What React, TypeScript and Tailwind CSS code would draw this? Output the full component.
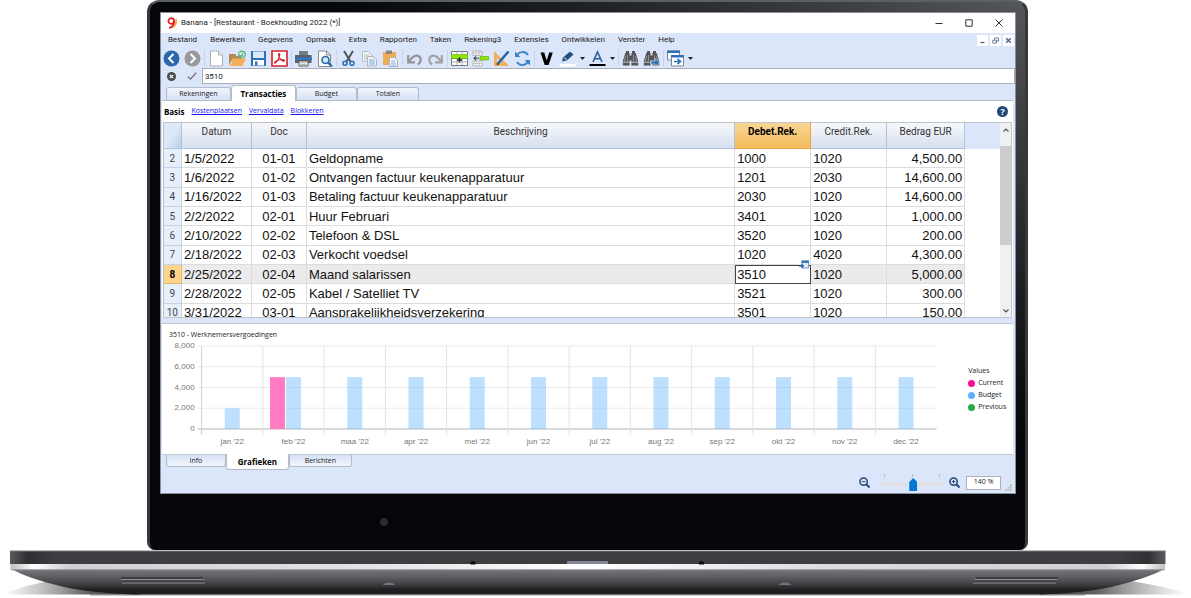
import { useState } from "react";
import type { ReactNode } from "react";

const rows = [
  ["2", "1/5/2022", "01-01", "Geldopname", "1000", "1020", "4,500.00"],
  ["3", "1/6/2022", "01-02", "Ontvangen factuur keukenapparatuur", "1201", "2030", "14,600.00"],
  ["4", "1/16/2022", "01-03", "Betaling factuur keukenapparatuur", "2030", "1020", "14,600.00"],
  ["5", "2/2/2022", "02-01", "Huur Februari", "3401", "1020", "1,000.00"],
  ["6", "2/10/2022", "02-02", "Telefoon & DSL", "3520", "1020", "200.00"],
  ["7", "2/18/2022", "02-03", "Verkocht voedsel", "1020", "4020", "4,300.00"],
  ["8", "2/25/2022", "02-04", "Maand salarissen", "3510", "1020", "5,000.00"],
  ["9", "2/28/2022", "02-05", "Kabel / Satelliet TV", "3521", "1020", "300.00"],
  ["10", "3/31/2022", "03-01", "Aansprakelijkheidsverzekering", "3501", "1020", "150.00"],
];

const menus = ["Bestand", "Bewerken", "Gegevens", "Opmaak", "Extra", "Rapporten", "Taken", "Rekening3", "Extensies", "Ontwikkelen", "Venster", "Help"];

const months = [
  { name: "jan '22", current: 0, budget: 2000 },
  { name: "feb '22", current: 5000, budget: 5000 },
  { name: "maa '22", current: 0, budget: 5000 },
  { name: "apr '22", current: 0, budget: 5000 },
  { name: "mei '22", current: 0, budget: 5000 },
  { name: "jun '22", current: 0, budget: 5000 },
  { name: "jul '22", current: 0, budget: 5000 },
  { name: "aug '22", current: 0, budget: 5000 },
  { name: "sep '22", current: 0, budget: 5000 },
  { name: "okt '22", current: 0, budget: 5000 },
  { name: "nov '22", current: 0, budget: 5000 },
  { name: "dec '22", current: 0, budget: 5000 },
];

function Tool({ label, children }: { label: string; children: ReactNode }) {
  return (
    <button type="button" aria-label={label} className="flex h-[17px] w-[17px] shrink-0 items-center justify-center">
      <svg viewBox="0 0 17 17" className="h-[17px] w-[17px]" fill="none">
        {children}
      </svg>
    </button>
  );
}

function Caret({ label }: { label: string }) {
  return (
    <button type="button" aria-label={label} className="flex h-[17px] w-[5px] shrink-0 items-center">
      <svg viewBox="0 0 5 3" className="h-[3px] w-[5px]">
        <path d="M0 0h5L2.500 3z" fill="#222" />
      </svg>
    </button>
  );
}

function Divider() {
  return <span className="h-4 w-px shrink-0 bg-[#c9d3e6]" />;
}

function Group({ children }: { children: ReactNode }) {
  return <div className="flex items-center gap-1">{children}</div>;
}

function Binoculars() {
  return (
    <g fill="#555">
      <path d="M4 1h3v2h.6v12.500H.8V11L3.300 3H4zM10 1h3v2h.7l2.500 8v4.500H9.400V3h.6z" />
      <path d="M7 5.500h3v5H7z" />
      <path d="M3.600 6l-1.200 5M5.500 5v6M13.500 6l1.200 5M11.500 5v6" stroke="#a9afba" strokeWidth=".7" />
      <path d="M1 12.200h6.500M9.500 12.200H16" stroke="#dbe6fa" strokeWidth=".8" />
    </g>
  );
}

function Toolbar() {
  return (
    <div className="flex h-5 items-center gap-[3px] pl-[2px]">
      <Group>
        <Tool label="Terug">
          <circle cx="8.500" cy="8.500" r="8" fill="#2a68ac" />
          <path d="M10.500 4L6 8.500l4.500 4.500" stroke="#fff" strokeWidth="2" />
        </Tool>
        <Tool label="Vooruit">
          <circle cx="8.500" cy="8.500" r="8" fill="#999" />
          <path d="M6.500 4L11 8.500 6.500 13" stroke="#fff" strokeWidth="2" />
        </Tool>
      </Group>
      <Divider />
      <Group>
        <Tool label="Nieuw">
          <path d="M2.500 1h8l4 4v11h-12z" fill="#fff" stroke="#b0b0b0" />
          <path d="M10.500 1v4h4" fill="#eee" stroke="#b0b0b0" />
        </Tool>
        <Tool label="Openen">
          <path d="M0 15V4h6l1.500 2H13v3H3.500z" fill="#b58a50" />
          <path d="M1 16L4 8.500h13L13.500 16z" fill="#f3ae58" />
          <circle cx="13" cy="4.300" r="3.900" fill="#63b58c" />
          <path d="M11 4.500a2 2 0 1 1 2 2M11 2.500v2h2" stroke="#fff" strokeWidth=".9" />
        </Tool>
        <Tool label="Opslaan">
          <path d="M1 1h15v15H1z" fill="#2d72b8" />
          <path d="M3 1.500h11v6.500H3z" fill="#dceaf7" />
          <path d="M3 10h11v5.500H3z" fill="#fff" />
          <path d="M5 11.500h2.500v4H5z" fill="#2d72b8" />
        </Tool>
        <Tool label="PDF">
          <path d="M1 1h15v15H1z" fill="#fff" stroke="#d2232a" strokeWidth="1.600" />
          <path d="M8.300 3.500c-1.500 0-.6 3 1 5.300 1.500 2 4 3 4.200 1.800.2-1.200-3-1.300-5.500-.6-3 .8-5 2-4.300 3 .8.900 3.200-2.500 4.200-5.200.8-2.200 1.200-4.300.4-4.300z" stroke="#d2232a" strokeWidth="1.100" />
        </Tool>
      </Group>
      <Divider />
      <Group>
        <Tool label="Afdrukken">
          <path d="M4 1h9v4H4z" fill="#777b82" />
          <path d="M1 5h15.500v8H0V5z" fill="#5c6168" />
          <path d="M0 7.500h17v2.500H0z" fill="#2f78bd" />
          <path d="M4 11h9v5H4z" fill="#fff" stroke="#555" />
          <path d="M5.500 12.800h6M5.500 14.500h6" stroke="#999" strokeWidth=".8" />
        </Tool>
        <Tool label="Afdrukvoorbeeld">
          <path d="M2.500 1h8l4 4v11.500h-12z" fill="#fff" stroke="#8a8a8a" />
          <path d="M10.500 1v4h4" stroke="#8a8a8a" />
          <circle cx="9.500" cy="10" r="3.500" fill="#d7e8f8" stroke="#2769ae" strokeWidth="1.700" />
          <path d="M12 12.500l4 4" stroke="#2769ae" strokeWidth="2.200" />
        </Tool>
      </Group>
      <Divider />
      <Group>
        <Tool label="Knippen">
          <path d="M4 1l6.800 11M13 1L6.200 12" stroke="#555" strokeWidth="2" />
          <circle cx="5" cy="13.300" r="2" stroke="#2d72b8" strokeWidth="1.600" />
          <circle cx="12" cy="13.300" r="2" stroke="#2d72b8" strokeWidth="1.600" />
        </Tool>
        <Tool label="Kopiëren">
          <path d="M1.500 1.500h6l3 3v7h-9z" fill="#f2f3f5" stroke="#b8bec8" />
          <path d="M3 5h5M3 7h5M3 9h5" stroke="#b8bec8" />
          <path d="M6.500 6.500h5.500l3.500 3v6.500h-9z" fill="#eef3f9" stroke="#a9b7c8" />
          <path d="M8 10h5M8 12h6M8 14h6" stroke="#9fc3e6" strokeWidth="1.300" />
        </Tool>
        <Tool label="Plakken">
          <path d="M1 2h13v13H1z" fill="#f0ac55" />
          <path d="M4 .5h6V4H4z" fill="#8b847b" />
          <path d="M7.500 7.500h5l3 3v6h-8z" fill="#f3f6fa" stroke="#a9b3c0" />
          <path d="M9 11h4M9 13h5M9 15h5" stroke="#a9cbe8" strokeWidth="1.300" />
        </Tool>
      </Group>
      <Divider />
      <Group>
        <Tool label="Ongedaan maken">
          <path d="M2.200 5v7.300h6.800M3 11.500C6 7 9.500 4.500 12.500 6c3 1.600 3.200 6-.8 8.500" stroke="#959595" strokeWidth="2.200" />
        </Tool>
        <Tool label="Opnieuw">
          <path d="M14.800 5v7.300H8M14 11.500C11 7 7.500 4.500 4.500 6c-3 1.600-3.200 6 .8 8.500" stroke="#a3a3a3" strokeWidth="2.200" />
        </Tool>
      </Group>
      <Divider />
      <Group>
        <Tool label="Rij invoegen">
          <path d="M.5 1.500h16v14H.5z" fill="#fff" stroke="#777" />
          <path d="M.5 8.500h16M.5 12h16M6 9v6M11 9v6M6 1.500v3M11 1.500v3" stroke="#999" strokeWidth=".8" />
          <path d="M0 4.500h17v4H0z" fill="#8fe800" stroke="#5b9d16" strokeWidth=".6" />
          <path d="M8.500 7.500v5M6 10h5" stroke="#222" strokeWidth="1.400" />
        </Tool>
        <Tool label="Rij toevoegen">
          <path d="M1 1h9v4.500H1zM1 11h9v5H1z" fill="#fff" stroke="#aaa" strokeWidth=".8" />
          <path d="M4 1v4.500M7 1v4.500M1 3h9M4 11v5M7 11v5M1 13.500h9" stroke="#aaa" strokeWidth=".7" />
          <path d="M8 6.500h8.500v3.500H8z" fill="#8fe800" stroke="#5b9d16" strokeWidth=".6" />
          <path d="M2 8.300h5M4 6.300l-2 2 2 2" stroke="#444" strokeWidth="1.100" />
        </Tool>
        <Tool label="Ontwerp">
          <path d="M1 1l15 15H1z" fill="#f0ae5e" />
          <path d="M4 8l5 5H4z" fill="#dbe6fa" />
          <path d="M15.500 1.500L5 13.500" stroke="#29639f" strokeWidth="2.600" />
          <path d="M3.500 15.500l.4-3 2.300 2z" fill="#444" />
        </Tool>
        <Tool label="Vernieuwen">
          <path d="M2.500 7A6.300 6.300 0 0 1 14 5M14.500 10A6.300 6.300 0 0 1 3 12" stroke="#3d86c6" strokeWidth="2" />
          <path d="M1 1.500V7h5.500zM16 15.500V10h-5.500z" fill="#3d86c6" />
        </Tool>
      </Group>
      <Divider />
      <Group>
        <Tool label="Controleren">
          <path d="M2.500 2.500h3.700l2.500 8 2.500-8h3.600L10.600 15H6.700z" fill="#000" />
        </Tool>
        <Tool label="Markeren">
          <path d="M3 11.500l1-4L11 1.500l3.500 3L8 10.500z" fill="#24507f" />
          <path d="M5 7.500l3 2.700" stroke="#dbe6fa" />
          <path d="M.5 14h16v2.500H.5z" fill="#fff" />
        </Tool>
        <Caret label="Markeerkleur" />
        <Tool label="Tekstkleur">
          <path d="M4 12L8.500 2 13 12M5.500 8.800h6" stroke="#2b5f97" strokeWidth="1.600" />
          <path d="M.5 14h16v2H.5z" fill="#000" />
        </Tool>
        <Caret label="Tekstkleuren" />
      </Group>
      <Divider />
      <Group>
        <Tool label="Zoeken">
          <Binoculars />
        </Tool>
        <Tool label="Volgende zoeken">
          <Binoculars />
          <path d="M8 11h4V8.500l5 4-5 4v-2.500H8z" fill="#2d72b8" stroke="#dbe6fa" strokeWidth=".6" />
        </Tool>
      </Group>
      <Divider />
      <Group>
        <Tool label="Vensters">
          <path d="M.5 1h12v9H.5z" fill="#fff" stroke="#7d8794" />
          <path d="M0 .5h13V3H0z" fill="#2d72b8" />
          <path d="M4.500 6h12v10h-12z" fill="#fff" stroke="#7d8794" />
          <path d="M4 5h13v2.500H4z" fill="#2d72b8" />
          <path d="M7 11.500h6M10.500 8.800l3 2.700-3 2.700" stroke="#2d72b8" strokeWidth="1.700" />
        </Tool>
        <Caret label="Vensterkeuze" />
      </Group>
    </div>
  );
}

function TitleBar() {
  return (
    <header className="flex h-5 shrink-0 items-center bg-white pl-[6px] text-[8px] text-[#222]">
      <svg viewBox="0 0 11 12" className="mr-[3px] h-3 w-[11px]" fill="none">
        <circle cx="4.200" cy="4" r="2.800" stroke="#e01f2d" strokeWidth="1.800" />
        <path d="M7 4c.3 3.500-1.300 6.200-5 6.800" stroke="#e01f2d" strokeWidth="1.800" />
        <path d="M9 1.500c1.500 4 0 8-4 9.500 3-2.500 4-5 4-9.500z" fill="#f5a41f" stroke="#f5a41f" strokeWidth=".8" />
      </svg>
      <h1>Banana - [Restaurant - Boekhouding 2022 (*)]</h1>
      <div className="ml-auto flex items-center gap-[22px] pr-3">
        <button type="button" aria-label="Minimaliseren">
          <svg viewBox="0 0 8 8" className="block h-2 w-2"><path d="M.5 4.500h7" stroke="#333" /></svg>
        </button>
        <button type="button" aria-label="Maximaliseren">
          <svg viewBox="0 0 8 8" className="block h-2 w-2"><path d="M.8.8h6.400v6.400H.8z" fill="none" stroke="#333" /></svg>
        </button>
        <button type="button" aria-label="Sluiten">
          <svg viewBox="0 0 8 8" className="block h-2 w-2"><path d="M.5.5l7 7M7.500.5l-7 7" stroke="#333" /></svg>
        </button>
      </div>
    </header>
  );
}

function MenuBar() {
  const box = "flex h-[11px] w-[11px] items-center justify-center bg-white";
  return (
    <nav className="flex h-[14px] items-center pl-[7px] text-[8px] text-[#222]">
      <div className="flex gap-[13px]">
        {menus.map((m) => (
          <button key={m} type="button">{m}</button>
        ))}
      </div>
      <div className="ml-auto flex gap-[2px] pr-px">
        <button type="button" aria-label="Document minimaliseren" className={box}>
          <svg viewBox="0 0 7 7" className="h-[7px] w-[7px]"><path d="M1.500 5.500h4" stroke="#4c5a78" strokeWidth="1.200" /></svg>
        </button>
        <button type="button" aria-label="Document herstellen" className={box}>
          <svg viewBox="0 0 7 7" className="h-[7px] w-[7px]" fill="none" stroke="#6b7894"><path d="M2.500 2.500v-1.500h4v3H5M.8 3.200h3.700v2.800H.8z" /></svg>
        </button>
        <button type="button" aria-label="Document sluiten" className={box}>
          <svg viewBox="0 0 7 7" className="h-[7px] w-[7px]"><path d="M1.200 1.200l4.600 4.600M5.800 1.200L1.200 5.800" stroke="#56627d" strokeWidth="1.400" /></svg>
        </button>
      </div>
    </nav>
  );
}

function EditRow() {
  return (
    <div className="flex h-4 items-center">
      <button type="button" aria-label="Annuleren" className="ml-[6px]">
        <svg viewBox="0 0 9 9" className="block h-[9px] w-[9px]">
          <circle cx="4.500" cy="4.500" r="4.500" fill="#4a4a4a" />
          <path d="M2.800 2.800l3.400 3.400M6.200 2.800L2.800 6.200" stroke="#fff" strokeWidth="1.200" />
        </svg>
      </button>
      <button type="button" aria-label="Bevestigen" className="ml-[11px]">
        <svg viewBox="0 0 10 8" className="block h-2 w-[10px]" fill="none">
          <path d="M.7 4.500L3.500 7 9.300.8" stroke="#777" strokeWidth="1.300" />
        </svg>
      </button>
      <input
        aria-label="Celinhoud"
        defaultValue="3510"
        className="ml-[5px] h-4 min-w-0 flex-1 border border-[#a9adb5] bg-white px-[2px] text-[8px] text-[#222] outline-none"
      />
    </div>
  );
}

function TopTabs() {
  const tab = "h-[13px] rounded-t-[3px] border border-b-0 border-[#b4bccb] bg-linear-to-b from-[#f2f6fd] to-[#d5e1f5]";
  return (
    <div className="flex h-[17px] items-end border-b border-[#b9bcc4] pl-1 font-['Open_Sans',sans-serif] text-[7px] leading-[12px] text-[#222]">
      <button type="button" className={`${tab} w-[65px]`}>Rekeningen</button>
      <button type="button" className="-mb-px h-4 w-[65px] rounded-t-[3px] border border-b-0 border-[#b4bccb] bg-white text-[8px] font-bold text-black">
        Transacties
      </button>
      <button type="button" className={`${tab} w-[61px]`}>Budget</button>
      <button type="button" className={`${tab} w-[62px]`}>Totalen</button>
    </div>
  );
}

function ViewLinks() {
  return (
    <div className="flex h-[21px] items-center gap-[7px] pl-px pr-1 font-['Open_Sans',sans-serif] text-[7px]">
      <span className="text-[8px] font-bold text-black">Basis</span>
      {["Kostenplaatsen", "Vervaldata", "Blokkeren"].map((l) => (
        <a key={l} href={`#${l}`} className="text-[#1414f0] underline">{l}</a>
      ))}
      <button type="button" aria-label="Hulp" className="ml-auto flex h-[11px] w-[11px] items-center justify-center rounded-full bg-[#22487a] text-[9px] font-bold leading-[11px] text-white">
        ?
      </button>
    </div>
  );
}

function Ledger() {
  const head = "border-b border-r border-[#afc3dd] bg-linear-to-b from-[#f6f8fb] to-[#d7e0ee] p-0 pt-[2px] align-top font-normal leading-[14px]";
  const cell = "border-b border-r border-[#dcdcdc] p-0 px-[2px] leading-[15px]";
  return (
    <div className="flex h-[196px] overflow-hidden border border-[#bfc3ca]">
      <div className="h-[194px] min-w-0 flex-1 overflow-hidden">
        <table className="h-[200px] w-full table-fixed border-separate border-spacing-0 text-[13px] text-[#111]">
          <colgroup>
            <col className="w-[18px]" />
            <col className="w-[70px]" />
            <col className="w-[55px]" />
            <col />
            <col className="w-[76px]" />
            <col className="w-[76px]" />
            <col className="w-[78px]" />
            <col className="w-[35px]" />
          </colgroup>
          <thead>
            <tr className="h-[26px] font-[Roboto,sans-serif] text-[10px] text-[#333]">
              <th aria-label="Rij" className="border-b border-r border-[#afc3dd] bg-linear-to-br from-[#dde8f8] from-50% to-[#b6cdec] p-0" />
              <th className={head}>Datum</th>
              <th className={head}>Doc</th>
              <th className={head}>Beschrijving</th>
              <th className="border-b border-r border-[#f0a24a] bg-linear-to-b from-[#fad695] to-[#f1bb58] p-0 pt-[2px] align-top font-bold leading-[14px] text-black">Debet.Rek.</th>
              <th className={head}>Credit.Rek.</th>
              <th className={head}>Bedrag EUR</th>
              <td className="bg-[#dbe6fa] p-0" />
            </tr>
          </thead>
          <tbody>
            {rows.map((r) => {
              const active = r[0] === "8";
              const dark = active ? `${cell} bg-[#ebebeb]` : cell;
              return (
                <tr key={r[0]}>
                  <th
                    className={
                      active
                        ? "border-b border-r border-[#e9b65f] bg-[#fcd48b] p-0 font-[Roboto,sans-serif] text-[10px] font-bold leading-[15px] text-black"
                        : "border-b border-r border-[#c3d2e8] bg-[#e7effb] p-0 font-[Roboto,sans-serif] text-[10px] font-normal leading-[15px] text-[#444]"
                    }
                  >
                    {r[0]}
                  </th>
                  <td className={dark}>{r[1]}</td>
                  <td className={`${dark} text-center`}>{r[2]}</td>
                  <td className={dark}>{r[3]}</td>
                  <td className={active ? "relative p-0 px-[2px] leading-[15px] outline outline-1 -outline-offset-1 outline-[#444]" : cell}>
                    {r[4]}
                    {active && (
                      <svg viewBox="0 0 10 10" className="absolute -top-[5px] right-[2px] h-[10px] w-[10px]">
                        <path d="M3 1h6.500v7H3z" fill="#dfe9f4" stroke="#7f9fc4" />
                        <path d="M2.500.5h7.500V3H2.500z" fill="#3a78b8" />
                        <path d="M0 6h4M2.500 4l2 2-2 2" fill="none" stroke="#2d72b8" strokeWidth="1.300" />
                      </svg>
                    )}
                  </td>
                  <td className={dark}>{r[5]}</td>
                  <td className={`${dark} text-right`}>{r[6]}</td>
                  <td className="p-0" />
                </tr>
              );
            })}
          </tbody>
        </table>
      </div>
      <div className="flex w-[11px] flex-col items-center bg-[#f0f0f0]">
        <button type="button" aria-label="Omhoog" className="flex h-[13px] items-center">
          <svg viewBox="0 0 6 4" className="h-1 w-[6px]"><path d="M.5 3.500L3 1l2.500 2.500" fill="none" stroke="#555" strokeWidth="1.200" /></svg>
        </button>
        <div className="mt-[10px] h-[99px] w-full bg-[#cdcdcd]" />
        <button type="button" aria-label="Omlaag" className="mt-auto flex h-[13px] items-center">
          <svg viewBox="0 0 6 4" className="h-1 w-[6px]"><path d="M.5.5L3 3 5.500.5" fill="none" stroke="#555" strokeWidth="1.200" /></svg>
        </button>
      </div>
    </div>
  );
}

function Chart() {
  const left = 39;
  const top = 6;
  const height = 83;
  const pitch = 61.25;
  const y = (v: number) => top + height - (v / 8000) * height;
  return (
    <svg viewBox="0 0 776 112" className="h-[112px] min-w-0 flex-1" role="img" aria-label="Werknemersvergoedingen per maand" fontFamily="'Liberation Sans', Arial, sans-serif" fontSize="8" fill="#777">
      {[0, 2000, 4000, 6000, 8000].map((v) => (
        <g key={v}>
          <line x1={left - 4} x2={left + pitch * 12} y1={y(v)} y2={y(v)} stroke={v === 0 ? "#b5b5b5" : "#ebebeb"} />
          <text x={left - 7} y={y(v) + 2} textAnchor="end">{v.toLocaleString("en-US")}</text>
        </g>
      ))}
      {months.map((m, i) => {
        const mid = left + pitch * (i + 0.5);
        return (
          <g key={m.name}>
            <line x1={left + pitch * i} x2={left + pitch * i} y1={top} y2={top + height + 6} stroke={i === 0 ? "#cfcfcf" : "#e4e4e4"} />
            <rect x={mid - 23.500} y={y(m.current)} width="15" height={(m.current / 8000) * height} fill="#ff7cc0" />
            <rect x={mid - 7.500} y={y(m.budget)} width="15" height={(m.budget / 8000) * height} fill="#7cc2ff" fillOpacity=".5" />
            <text x={mid} y={top + height + 15} textAnchor="middle">{m.name}</text>
          </g>
        );
      })}
    </svg>
  );
}

function ChartPanel() {
  return (
    <section className="h-[132px] border-y border-[#c3c7ce] bg-white font-['Open_Sans',sans-serif] text-[7px] text-[#222]">
      <h2 className="pl-[7px] pt-[6px] leading-[10px]">3510 - Werknemersvergoedingen</h2>
      <div className="flex">
        <Chart />
        <div className="w-[74px] pt-[25px] leading-[12px]">
          <p className="pl-[29px]">Values</p>
          <ul className="pl-[29px]">
            <li className="flex items-center gap-[3px]"><span className="h-[7px] w-[7px] rounded-full bg-[#ff0a96]" />Current</li>
            <li className="flex items-center gap-[3px]"><span className="h-[7px] w-[7px] rounded-full bg-[#5eb0fb]" />Budget</li>
            <li className="flex items-center gap-[3px]"><span className="h-[7px] w-[7px] rounded-full bg-[#2cab43]" />Previous</li>
          </ul>
        </div>
      </div>
    </section>
  );
}

function BottomTabs() {
  const tab = "h-3 rounded-b-[3px] border border-t-0 border-[#b4bccb] bg-linear-to-b from-[#d5e1f5] to-[#f2f6fd]";
  return (
    <div className="flex h-[15px] items-start pl-[5px] font-['Open_Sans',sans-serif] text-[7px] leading-[11px] text-[#222]">
      <button type="button" className={`${tab} w-[60px]`}>Info</button>
      <button type="button" className="-mt-px h-4 w-[63px] rounded-b-[3px] border border-t-0 border-[#b4bccb] bg-white text-[8px] font-bold text-black">
        Grafieken
      </button>
      <button type="button" className={`${tab} w-[63px]`}>Berichten</button>
    </div>
  );
}

function Lens({ plus }: { plus: boolean }) {
  return (
    <svg viewBox="0 0 11 11" className="block h-[11px] w-[11px]" fill="none" stroke="#23497a">
      <circle cx="4.600" cy="4.600" r="3.700" strokeWidth="1.500" />
      <path d="M7.300 7.300l3.200 3.200" strokeWidth="2" />
      <path d={plus ? "M2.800 4.600h3.600M4.600 2.800v3.600" : "M2.800 4.600h3.600"} />
    </svg>
  );
}

function StatusBar() {
  const [zoom, setZoom] = useState(52);
  return (
    <footer className="flex h-[23px] items-center justify-end pr-[3px] pt-[2px]">
      <button type="button" aria-label="Uitzoomen" className="mr-[10px]"><Lens plus={false} /></button>
      <div className="flex w-16 flex-col">
        <div className="flex h-1 justify-between px-1">
          <span className="h-[3px] w-px bg-[#b5b5b5]" />
          <span className="h-[3px] w-px bg-[#b5b5b5]" />
          <span className="h-[3px] w-px bg-[#b5b5b5]" />
        </div>
        <input
          type="range"
          aria-label="Zoom"
          min={0}
          max={100}
          value={zoom}
          onChange={(e) => setZoom(Number(e.target.value))}
          className="block h-[13px] w-16 appearance-none bg-transparent [&::-webkit-slider-runnable-track]:h-[3px] [&::-webkit-slider-runnable-track]:bg-[#e1e1e1] [&::-webkit-slider-thumb]:-mt-[5px] [&::-webkit-slider-thumb]:h-[13px] [&::-webkit-slider-thumb]:w-2 [&::-webkit-slider-thumb]:appearance-none [&::-webkit-slider-thumb]:bg-[#0078d7] [&::-webkit-slider-thumb]:[clip-path:polygon(0_30%,50%_0,100%_30%,100%_100%,0_100%)]"
        />
      </div>
      <button type="button" aria-label="Inzoomen" className="ml-[5px] mr-[6px]"><Lens plus /></button>
      <output className="flex h-[14px] w-[35px] items-center justify-center border border-[#aeb2b8] bg-white font-['Open_Sans',sans-serif] text-[7px] text-[#222]">140 %</output>
      <svg viewBox="0 0 7 7" className="ml-1 mt-auto mb-[2px] h-[7px] w-[7px]" fill="#bcc6ba">
        <path d="M5 0h2v2H5zM5 2.500h2v2H5zM5 5h2v2H5zM2.500 2.500h2v2h-2zM2.500 5h2v2h-2zM0 5h2v2H0z" />
      </svg>
    </footer>
  );
}

function LaptopBase() {
  return (
    <svg viewBox="0 0 1191 48" preserveAspectRatio="none" className="block h-12 w-full" aria-hidden="true">
      <defs>
        <linearGradient id="belly" x1="0" y1="0" x2="0" y2="1">
          <stop offset="0" stopColor="#77777b" />
          <stop offset=".3" stopColor="#5e5e63" />
          <stop offset=".6" stopColor="#404044" />
          <stop offset=".8" stopColor="#212123" />
          <stop offset="1" stopColor="#1b1b1c" />
        </linearGradient>
        <linearGradient id="deck" x1="0" x2="1">
          <stop offset="0" stopColor="#5a5b5f" />
          <stop offset=".015" stopColor="#2e2f32" />
          <stop offset=".04" stopColor="#3d3e42" />
          <stop offset=".96" stopColor="#3d3e42" />
          <stop offset=".985" stopColor="#303134" />
          <stop offset="1" stopColor="#5a5b5f" />
        </linearGradient>
        <linearGradient id="strip" x1="0" x2="1">
          <stop offset="0" stopColor="#bfbfc1" />
          <stop offset=".02" stopColor="#fff" />
          <stop offset=".05" stopColor="#cfd0d4" />
          <stop offset=".3" stopColor="#e2e2e4" />
          <stop offset=".5" stopColor="#fff" />
          <stop offset=".7" stopColor="#dcdde1" />
          <stop offset=".95" stopColor="#cfd0d4" />
          <stop offset=".98" stopColor="#fff" />
          <stop offset="1" stopColor="#bfbfc1" />
        </linearGradient>
        <linearGradient id="shadeL" x1="0" x2="1">
          <stop offset="0" stopColor="#888" stopOpacity="0" />
          <stop offset=".6" stopColor="#555" stopOpacity=".9" />
          <stop offset="1" stopColor="#333" />
        </linearGradient>
        <linearGradient id="shadeR" x1="1" x2="0">
          <stop offset="0" stopColor="#888" stopOpacity="0" />
          <stop offset=".6" stopColor="#555" stopOpacity=".9" />
          <stop offset="1" stopColor="#333" />
        </linearGradient>
      </defs>
      <path d="M90 43H1085V46H90z" fill="#c9c9c9" />
      <path d="M2 44Q25 35 50 31L140 40V44.500H20z" fill="url(#shadeL)" />
      <path d="M1188 44Q1160 35 1130 31L1040 40V44.500H1170z" fill="url(#shadeR)" />
      <path d="M11 19H1165Q1145 29 1115 36Q1085 43 1040 44.500H135Q90 43 60 36Q30 29 11 19z" fill="url(#belly)" />
      <path d="M10 1H1165.500V14H10z" fill="url(#deck)" />
      <path d="M10 .5H1165.500V1.500H10z" fill="#77787d" />
      <path d="M10.500 14H1165V19.500H10.500z" fill="url(#strip)" />
      <path d="M10.500 19.500H1165V20.300H10.500z" fill="#98989c" />
      <path d="M567 14v-2q0-1 1-1h39q1 0 1 1v2z" fill="#84869a" />
      <path d="M470.500 14a2.500 2.500 0 0 1 5 0zM699 14a2.500 2.500 0 0 1 5 0z" fill="#0c0d10" stroke="#0c0d10" />
      <path d="M121 27h82v1.800h-82zM122 31h82v1.500h-82zM976 27h82v1.800h-82zM974 31h82v1.500h-82z" fill="#3b3b3f" />
      <path d="M121 29h83v.9h-83zM122 32.500h83v.9h-83zM975 29h82v.9h-82zM973 32.500h83v.9h-83z" fill="#8a8a8e" />
      <path d="M383 35q1-2.500 6-2.500t6 2.500zM779 35q1-2.500 6-2.500t6 2.500z" fill="#737378" />
    </svg>
  );
}

export default function App() {
  return (
    <main className="w-full bg-white font-[Roboto,sans-serif]">
      <div className="pr-4">
        <div className="mx-auto w-3/4 rounded-t-[12px] rounded-b-[8px] border-[3px] border-t-[2px] border-b-0 border-[#37383c] border-t-[#5c5f63] bg-linear-to-bl from-[#56575b] via-[#06070b] via-40% to-[#06070b] pl-[11px] pr-[10px] pt-[11px]">
          <div className="flex flex-col bg-[#dbe6fa] shadow-[0_0_0_1px_#8a8f99]">
            <TitleBar />
            <MenuBar />
            <div className="pt-px"><Toolbar /></div>
            <EditRow />
            <div className="pl-px pr-[2px]">
              <TopTabs />
              <div className="bg-white px-px">
                <ViewLinks />
                <div className="font-['Liberation_Sans',Arial,sans-serif]">
                  <Ledger />
                </div>
              </div>
              <div className="h-[5px]" />
              <ChartPanel />
            </div>
            <BottomTabs />
            <StatusBar />
          </div>
          <div className="flex h-[57px] items-center pl-[219px]">
            <span className="h-2 w-2 rounded-full bg-[#2a2b2f]" />
          </div>
        </div>
      </div>
      <LaptopBase />
    </main>
  );
}
